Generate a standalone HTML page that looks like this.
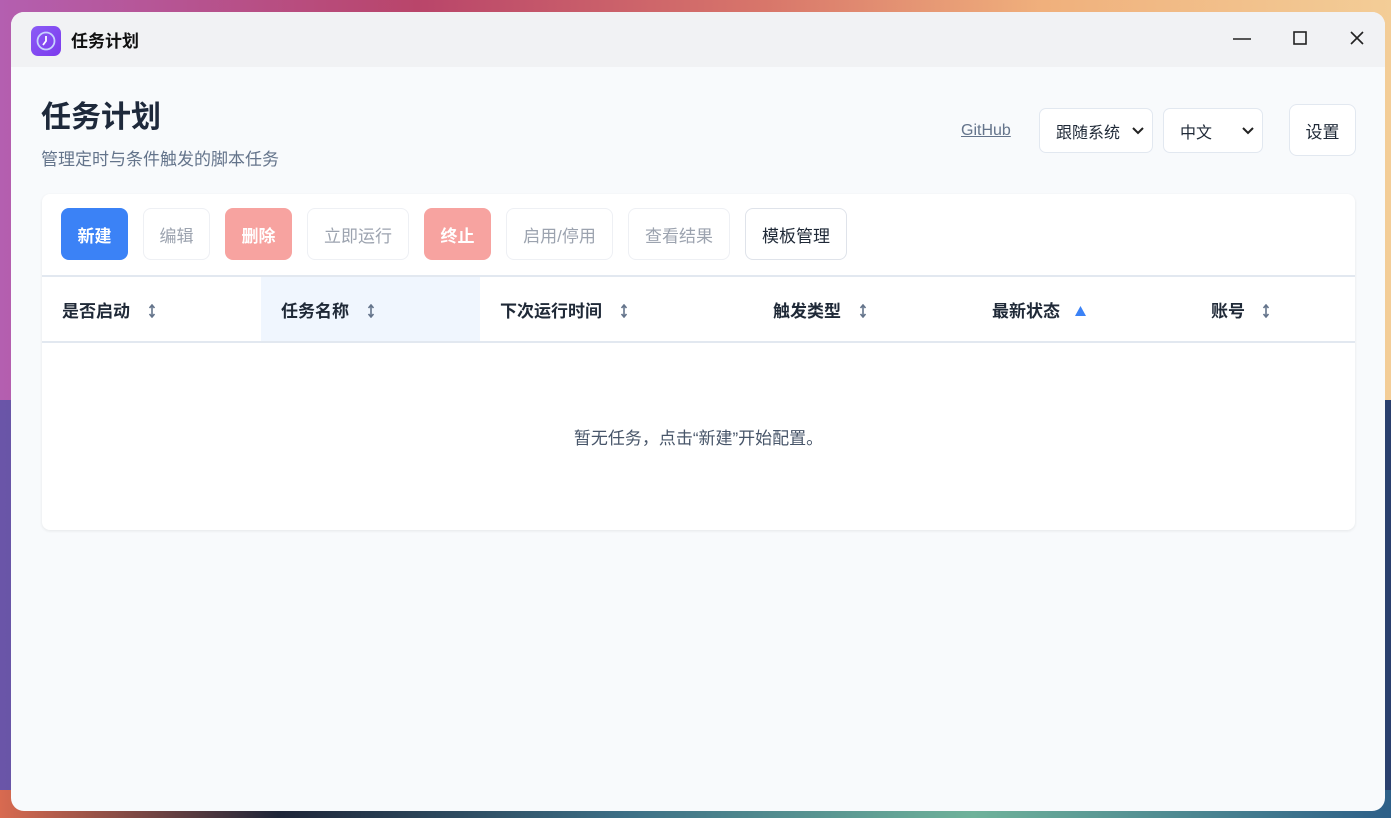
<!DOCTYPE html>
<html><head><meta charset="utf-8"><style>
*{box-sizing:border-box;margin:0;padding:0}
body{width:1391px;height:818px;overflow:hidden;position:relative;font-family:"Liberation Sans","Noto Sans CJK SC",sans-serif;
background:linear-gradient(90deg,#b45fb0 0%,#b9456a 30%,#d8766a 55%,#f0b07c 75%,#f3cd97 100%);}
.bgb{position:absolute;left:0;right:0;top:400px;bottom:0;background:linear-gradient(90deg,#6a55a8 0%,#3b4a7a 30%,#2c4c6a 60%,#2a5d7a 85%,#2a3f6e 100%);}
.bgb2{position:absolute;left:0;right:0;top:790px;bottom:0;background:linear-gradient(90deg,#d86a50 0%,#1e2538 20%,#3d6f86 45%,#6fb29a 70%,#2d5f88 100%);}
.win{position:absolute;left:11px;top:12px;width:1374px;height:799px;background:#f8fafc;border-radius:13px;overflow:hidden}
.tb{height:55px;background:#f1f2f4;position:relative}
.logo{position:absolute;left:20px;top:14px;width:30px;height:30px;border-radius:7px;background:linear-gradient(135deg,#8b5cf6,#7c3aed)}
.tt{position:absolute;left:60px;top:15px;font-size:17px;font-weight:bold;color:#111}
.ctl{position:absolute;top:18px}
.c{display:flex;align-items:center;justify-content:center}
.h1{position:absolute;left:30px;top:80px;font-size:30px;font-weight:bold;color:#1e293b}
.sub{position:absolute;left:30px;top:133px;font-size:17px;color:#64748b}
.gh{position:absolute;left:950px;top:110px;font-size:16px;color:#64748b;text-decoration:underline}
.sel{position:absolute;top:96px;height:45px;background:#fff;border:1px solid #e2e8f0;border-radius:7px;font-size:16px;color:#1f2937;padding:0 0 0 16px;display:flex;align-items:center}
.sel svg{position:absolute;right:8px;top:18px}
.set{position:absolute;left:1278px;top:92px;width:67px;height:52px;background:#fff;border:1px solid #e2e8f0;border-radius:8px;font-size:17px;color:#1f2937}
.card{position:absolute;left:31px;top:182px;width:1313px;height:336px;background:#fff;border-radius:8px;box-shadow:0 1px 3px rgba(0,0,0,.08)}
.btn{position:absolute;top:14px;height:52px;border-radius:8px;font-size:17px;border:1px solid #eef0f4;color:#9ca3af;background:#fff}
.hdr{position:absolute;left:0;top:81px;width:1313px;height:68px;border-top:2px solid #e2e8f0;border-bottom:2px solid #e2e8f0}
.th{position:absolute;top:20px;height:24px;display:flex;align-items:center;font-size:17px;font-weight:bold;color:#1f2937}
.ar{position:absolute;top:27px}
.empty{position:absolute;left:0;width:1313px;top:230px;text-align:center;font-size:17px;color:#475569}
</style></head><body>
<div class="bgb"></div><div class="bgb2"></div>
<div class="win">
<div class="tb">
<div class="logo"><svg width="30" height="30"><circle cx="15" cy="15" r="8.5" fill="none" stroke="#c7d2fe" stroke-width="1.8"/><path d="M15 10v5l-3 4" stroke="#fff" stroke-width="1.8" fill="none"/></svg></div>
<div class="tt">任务计划</div>
<svg class="ctl" style="left:1222px" width="18" height="18"><path d="M0 9h18" stroke="#222" stroke-width="1.6"/></svg>
<svg class="ctl" style="left:1282px" width="14" height="18"><rect x="1" y="2" width="12" height="12" fill="none" stroke="#222" stroke-width="1.6"/></svg>
<svg class="ctl" style="left:1339px" width="14" height="18"><path d="M1 2l12 12M13 2L1 14" stroke="#222" stroke-width="1.6"/></svg>
</div>
<div class="h1">任务计划</div>
<div class="sub">管理定时与条件触发的脚本任务</div>
<div class="gh">GitHub</div>
<div class="sel" style="left:1028px;width:114px">跟随系统<svg width="12" height="8"><path d="M1 1l5 5 5-5" stroke="#222" stroke-width="2" fill="none"/></svg></div>
<div class="sel" style="left:1152px;width:100px">中文<svg width="12" height="8"><path d="M1 1l5 5 5-5" stroke="#222" stroke-width="2" fill="none"/></svg></div>
<div class="set c">设置</div>
<div class="card">
<div class="btn c" style="left:19px;width:67px;background:#3b82f6;color:#fff;border:none;font-weight:bold">新建</div>
<div class="btn c" style="left:101px;width:67px">编辑</div>
<div class="btn c" style="left:183px;width:67px;background:#f7a3a0;color:#fff;border:none;font-weight:bold">删除</div>
<div class="btn c" style="left:265px;width:102px">立即运行</div>
<div class="btn c" style="left:382px;width:67px;background:#f7a3a0;color:#fff;border:none;font-weight:bold">终止</div>
<div class="btn c" style="left:464px;width:107px">启用/停用</div>
<div class="btn c" style="left:586px;width:102px">查看结果</div>
<div class="btn c" style="left:703px;width:102px;color:#1f2937;border-color:#dfe3ea">模板管理</div>
<div class="hdr">
<div style="position:absolute;left:219px;top:0;width:219px;height:64px;background:#f0f6fe"></div>
<div class="th" style="left:20px">是否启动</div>
<div class="th" style="left:239px">任务名称</div>
<div class="th" style="left:458px">下次运行时间</div>
<div class="th" style="left:731px">触发类型</div>
<div class="th" style="left:950px">最新状态</div>
<div class="th" style="left:1169px">账号</div>
<svg class="ar" style="left:106px" width="8" height="14"><path d="M4 1v12M1.5 4L4 1l2.5 3M1.5 10L4 13l2.5-3" stroke="#64748b" stroke-width="1.6" fill="none"/></svg>
<svg class="ar" style="left:325px" width="8" height="14"><path d="M4 1v12M1.5 4L4 1l2.5 3M1.5 10L4 13l2.5-3" stroke="#64748b" stroke-width="1.6" fill="none"/></svg>
<svg class="ar" style="left:578px" width="8" height="14"><path d="M4 1v12M1.5 4L4 1l2.5 3M1.5 10L4 13l2.5-3" stroke="#64748b" stroke-width="1.6" fill="none"/></svg>
<svg class="ar" style="left:817px" width="8" height="14"><path d="M4 1v12M1.5 4L4 1l2.5 3M1.5 10L4 13l2.5-3" stroke="#64748b" stroke-width="1.6" fill="none"/></svg>
<svg class="ar" style="left:1032px;top:28px" width="13" height="12"><path d="M6.5 1L12 11H1z" fill="#3b82f6"/></svg>
<svg class="ar" style="left:1220px" width="8" height="14"><path d="M4 1v12M1.5 4L4 1l2.5 3M1.5 10L4 13l2.5-3" stroke="#64748b" stroke-width="1.6" fill="none"/></svg>
</div>
<div class="empty">暂无任务，点击“新建”开始配置。</div>
</div>
</div>
</body></html>
